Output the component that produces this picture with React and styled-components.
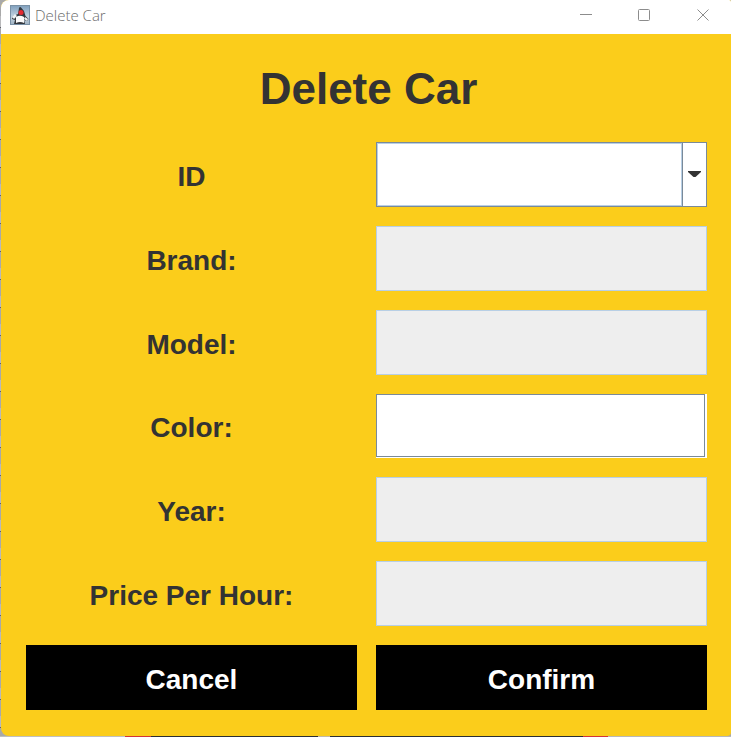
import React from "react";
import styled, { createGlobalStyle } from "styled-components";

const GlobalStyle = createGlobalStyle`
  *, *::before, *::after { box-sizing: border-box; }
  body { margin: 0; font-family: "Liberation Sans", Arial, sans-serif; }
`;

const Desktop = styled.div`
  display: flex;
  min-height: 100vh;
  padding: 0 0 1px 1px;
  background:
    linear-gradient(90deg, #c0c0c0 125px, #d0343a 125px 151px, #2b2e33 151px 318px, #c0b8a8 318px 330px, #2b2e33 330px 583px, #d0343a 583px 608px, #b8b8b8 608px) bottom / 100% 1px no-repeat,
    repeating-linear-gradient(180deg, #a9a9a9 0 16px, #b9b9bb 16px 27px, #5f6068 27px 28px);
`;

const Window = styled.main`
  flex: 1;
  display: flex;
  flex-direction: column;
  overflow: hidden;
  border-radius: 8px 2px 4px 8px;
  background: #fbcd1b;
`;

const TitleBar = styled.header`
  display: flex;
  align-items: center;
  height: 34px;
  padding: 0 0 4px 9px;
  background: #fff;
`;

const Caption = styled.span`
  flex: 1;
  margin-left: 5px;
  font: 300 15px/20px "Open Sans", "Noto Sans", sans-serif;
  color: #6c6c6c;
`;

const WindowButton = styled.button`
  display: grid;
  place-items: center;
  width: 58px;
  height: 30px;
  padding: 0;
  border: 0;
  background: none;
  color: #8c8c8c;
`;

const Content = styled.form`
  flex: 1;
  display: flex;
  flex-direction: column;
  padding: 26px 24px 26px 25px;
`;

const Heading = styled.h1`
  margin: 0 0 24px;
  padding-left: 4px;
  font-size: 44px;
  line-height: 58px;
  text-align: center;
  color: #333;
`;

const Fields = styled.div`
  flex: 1;
  display: grid;
  grid-template-columns: 1fr 1fr;
  grid-auto-rows: minmax(48px, 1fr);
  gap: 19px;
`;

const Label = styled.label`
  display: grid;
  place-items: center;
  padding-top: 5px;
  font-size: 28px;
  font-weight: 700;
  line-height: 32px;
  color: #333;
`;

const TextField = styled.input`
  width: 100%;
  min-width: 0;
  height: 100%;
  padding: 0 8px;
  border: 1px solid ${(p) => (p.readOnly ? "#b8cfe5" : "#7a8a99")};
  border-radius: 0;
  outline: 0;
  background: ${(p) => (p.readOnly ? "#eee" : "#fff")};
  font: 700 28px "Liberation Sans", Arial, sans-serif;
  color: #333;
`;

const EtchedFrame = styled.div`
  padding: 0 2px 1px 0;
  background: #fff;
`;

const Combo = styled.div`
  display: grid;
  grid-template-columns: minmax(0, 1fr) 24px;
  border: 1px solid #7a8a99;
  background: #fff;
`;

const ComboSelect = styled.select`
  grid-area: 1 / 1 / 2 / 3;
  appearance: none;
  width: 100%;
  height: 100%;
  padding: 0 32px 0 8px;
  border: 0;
  border-radius: 0;
  outline: 0;
  background: #fff;
  font: 700 28px "Liberation Sans", Arial, sans-serif;
  color: #333;
`;

const ComboInset = styled.span`
  grid-area: 1 / 1;
  border: 1px solid #b8cfe5;
  pointer-events: none;
`;

const ComboArrow = styled.span`
  grid-area: 1 / 2;
  display: grid;
  place-items: center;
  border-left: 1px solid #7a8a99;
  pointer-events: none;
`;

const ActionButton = styled.button`
  padding: 4px 0 0;
  border: 0;
  border-radius: 0;
  background: #000;
  font: 700 28px/32px "Liberation Sans", Arial, sans-serif;
  color: #fff;
`;

const AppIcon = () => (
  <svg width="20" height="20" viewBox="0 0 20 20" aria-hidden="true">
    <defs>
      <linearGradient id="tile" x1="0" y1="0" x2="0" y2="1">
        <stop offset="0" stopColor="#7f9fbd" />
        <stop offset=".6" stopColor="#c3d3e0" />
        <stop offset="1" stopColor="#9fb2c2" />
      </linearGradient>
    </defs>
    <rect x=".5" y=".5" width="19" height="19" fill="url(#tile)" stroke="#7890a5" />
    <path d="M8 9 L9 3 Q10 1 11.500 3 L14 6 L15.500 11 L18.500 14 L17 16 L14 15 L15 19 H4 L5 15 L2 14 L3 11 Z" fill="#33373d" />
    <path d="M6 12 Q10 9.500 14 12 L14 18 Q10 16 6 18 Z" fill="#fafafa" />
    <path d="M2 12 L5 9 L7 11 L4 14 Z" fill="#eef2f5" />
    <path d="M15 12 L18 14 L17 16 L14 14 Z" fill="#eef2f5" />
    <ellipse cx="11" cy="7.500" rx="2.500" ry="2.500" fill="#e52a31" />
  </svg>
);

const fields = [
  { id: "brand", label: "Brand:", readOnly: true },
  { id: "model", label: "Model:", readOnly: true },
  { id: "color", label: "Color:", readOnly: false },
  { id: "year", label: "Year:", readOnly: true },
  { id: "price", label: "Price Per Hour:", readOnly: true },
];

export default function App() {
  return (
    <Desktop>
      <GlobalStyle />
      <Window>
        <TitleBar>
          <AppIcon />
          <Caption>Delete Car</Caption>
          <WindowButton type="button" aria-label="Minimize">
            <svg width="12" height="12" fill="none" stroke="currentColor"><path d="M0 5.5H12" /></svg>
          </WindowButton>
          <WindowButton type="button" aria-label="Maximize">
            <svg width="12" height="12" fill="none" stroke="currentColor"><rect x=".5" y=".5" width="11" height="11" rx="1" /></svg>
          </WindowButton>
          <WindowButton type="button" aria-label="Close">
            <svg width="13" height="12" fill="none" stroke="currentColor"><path d="M1.500 .5L12.500 11.500M12.500 .5L1.500 11.500" /></svg>
          </WindowButton>
        </TitleBar>
        <Content onSubmit={(e) => e.preventDefault()}>
          <Heading>Delete Car</Heading>
          <Fields>
            <Label htmlFor="car-id">ID</Label>
            <Combo>
              <ComboSelect id="car-id" />
              <ComboInset />
              <ComboArrow>
                <svg width="13" height="6" aria-hidden="true"><path d="M0 0H13V1L7.500 6H5.500L0 1Z" fill="#333" /></svg>
              </ComboArrow>
            </Combo>
            {fields.map(({ id, label, readOnly }) => (
              <React.Fragment key={id}>
                <Label htmlFor={id}>{label}</Label>
                {readOnly ? (
                  <TextField id={id} type="text" readOnly />
                ) : (
                  <EtchedFrame>
                    <TextField id={id} type="text" />
                  </EtchedFrame>
                )}
              </React.Fragment>
            ))}
            <ActionButton type="button">Cancel</ActionButton>
            <ActionButton type="submit">Confirm</ActionButton>
          </Fields>
        </Content>
      </Window>
    </Desktop>
  );
}
